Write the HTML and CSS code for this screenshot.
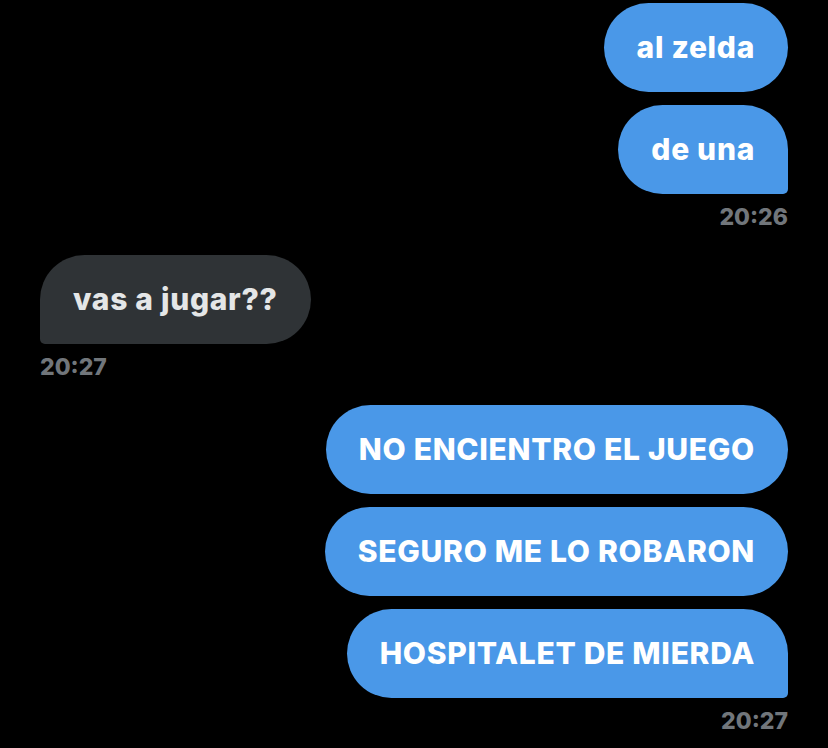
FILE: index.html
```html
<!DOCTYPE html>
<html lang="es">
<head>
    <meta charset="UTF-8">
    <meta name="viewport" content="width=device-width, initial-scale=1.0">
    <title>Mensajes</title>
    <link rel="stylesheet" href="styles.css">
</head>
<body>
    <div class="chat">
        <!-- mensajes enviados -->
        <div class="group sent">
            <div class="bubble">al zelda</div>
            <div class="bubble last">de una</div>
            <div class="time">20:26</div>
        </div>

        <!-- mensaje recibido -->
        <div class="group received">
            <div class="bubble last">vas a jugar??</div>
            <div class="time">20:27</div>
        </div>

        <div class="group sent">
            <div class="bubble">NO ENCIENTRO EL JUEGO</div>
            <div class="bubble">SEGURO ME LO ROBARON</div>
            <div class="bubble last">HOSPITALET DE MIERDA</div>
            <div class="time">20:27</div>
        </div>
    </div>
</body>
</html>
```

FILE: styles.css
```css
body {
    margin: 0;
    background-color: #000;
    font-family: Inter, 'Liberation Sans', Arial, sans-serif;
    font-weight: 800;
}

.chat {
    display: flex;
    flex-direction: column;
    gap: 24px;
    padding: 3px 40px;
}

.group {
    display: flex;
    flex-direction: column;
    gap: 13px;
}

.sent {
    align-items: flex-end;
}

.received {
    align-items: flex-start;
}

.bubble {
    padding: 26px 33px;
    font-size: 30px;
    line-height: 37px;
    letter-spacing: 0.7px;
    border-radius: 45px;
    white-space: nowrap;
}

.sent .bubble {
    background-color: #4a98e8;
    color: #fff;
}

.received .bubble {
    background-color: #2f3336;
    color: #e4e6e7;
}

.sent .bubble.last {
    border-bottom-right-radius: 5px;
}

.received .bubble.last {
    border-bottom-left-radius: 5px;
}

.time {
    margin-top: -4px;
    font-size: 23px;
    line-height: 28px;
    color: #71767b;
}
```
